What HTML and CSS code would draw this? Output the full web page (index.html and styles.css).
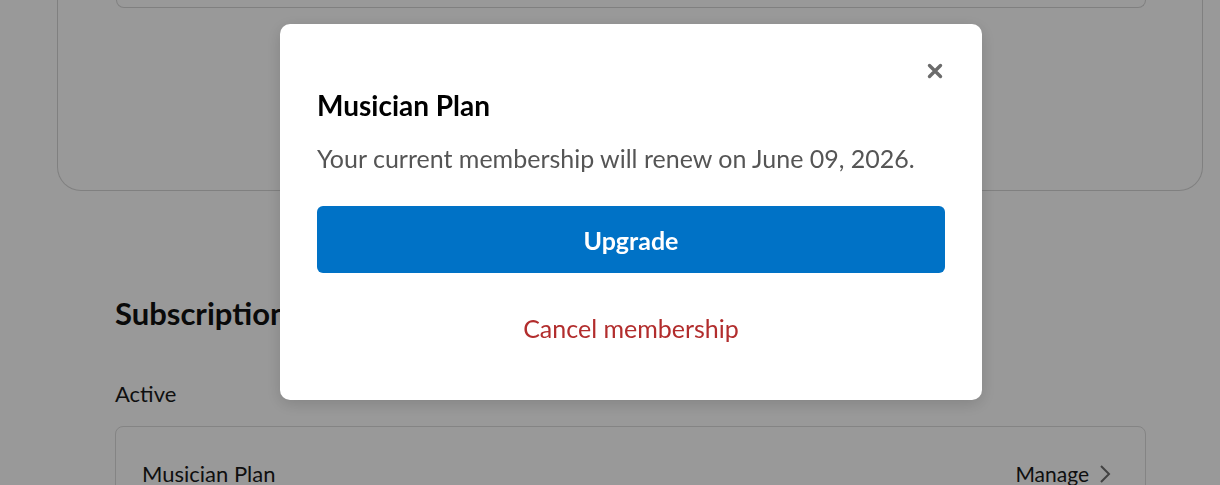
FILE: index.html
```html
<!DOCTYPE html>
<html>
<head>
<meta charset="utf-8">
<link rel="stylesheet" href="styles.css">
</head>
<body>
<main class="page">
  <section class="plan-card">
    <div class="plan-inner"></div>
  </section>
  <section class="subs">
    <h2 class="subs-title">Subscriptions</h2>
    <div class="subs-label">Active</div>
    <div class="subs-card">
      <span class="subs-name">Musician Plan</span>
      <span class="subs-manage">Manage
        <svg class="chev" width="12" height="20" viewBox="0 0 12 20"><path d="M2 2 L10 10 L2 18" fill="none" stroke="#6e6e6e" stroke-width="2"/></svg>
      </span>
    </div>
  </section>
</main>
<div class="overlay"></div>
<div class="modal">
  <button class="close" aria-label="Close">
    <svg width="16" height="16" viewBox="0 0 16 16"><path d="M2.5 2.5 L13.5 13.5 M13.5 2.5 L2.5 13.5" stroke="#6b6b6b" stroke-width="3.4" stroke-linecap="round"/></svg>
  </button>
  <h3 class="modal-title">Musician Plan</h3>
  <p class="modal-text">Your current membership will renew on June 09, 2026.</p>
  <button class="upgrade">Upgrade</button>
  <button class="cancel">Cancel membership</button>
</div>
</body>
</html>
```
FILE: styles.css
```css
* { box-sizing: border-box; }
html, body { margin: 0; padding: 0; }
body {
  width: 1220px;
  height: 485px;
  overflow: hidden;
  background: #fff;
  font-family: Lato, "Noto Sans", sans-serif;
  color: #1a1a1a;
}
.page {
  padding: 0 17px 0 57px;
}
.plan-card {
  margin-top: -200px;
  height: 391px;
  border: 1px solid #d6d6d6;
  border-top: none;
  border-radius: 0 0 24px 24px;
  padding: 0 56px 0 58px;
}
.plan-inner {
  height: 208px;
  border: 1px solid #d6d6d6;
  border-top: none;
  border-radius: 0 0 8px 8px;
}
.subs {
  padding: 0 57px 0 58px;
}
.subs-title {
  margin: 104px 0 0;
  font-size: 31px;
  font-weight: 700;
  line-height: 36px;
  color: #111;
}
.subs-label {
  margin-top: 49px;
  font-size: 22px;
  line-height: 28px;
}
.subs-card {
  margin-top: 18px;
  height: 100px;
  border: 1px solid #dcdcdc;
  border-radius: 8px;
  padding: 33px 34px 0 26px;
  display: flex;
  justify-content: space-between;
  align-items: flex-start;
  font-size: 22px;
  line-height: 28px;
}
.subs-manage {
  display: flex;
  align-items: center;
  gap: 10px;
  font-size: 21px;
}
.overlay {
  position: fixed;
  inset: 0;
  background: rgba(0, 0, 0, 0.4);
}
.modal {
  position: fixed;
  left: 280px;
  top: 24px;
  width: 702px;
  height: 376px;
  background: #fff;
  border-radius: 10px;
  box-shadow: 0 4px 16px rgba(0,0,0,0.15);
  padding: 0 37px;
  display: flex;
  flex-direction: column;
}
.close {
  position: absolute;
  right: 39px;
  top: 39px;
  border: none;
  background: none;
  padding: 0;
  width: 16px;
  height: 16px;
  cursor: pointer;
}
.close svg { display: block; }
.modal-title {
  margin: 64px 0 0;
  font-size: 28px;
  font-weight: 700;
  line-height: 34px;
  color: #000;
}
.modal-text {
  margin: 20px 0 0;
  font-size: 25px;
  line-height: 32px;
  color: #555;
}
.upgrade {
  margin-top: 32px;
  height: 67px;
  border: none;
  border-radius: 6px;
  background: #0072c6;
  color: #fff;
  font-family: Lato, "Noto Sans", sans-serif;
  font-size: 25px;
  font-weight: 700;
}
.cancel {
  margin-top: 39px;
  border: none;
  background: none;
  color: #b22d2d;
  font-family: Lato, "Noto Sans", sans-serif;
  font-size: 25px;
  line-height: 32px;
  padding: 0;
  align-self: center;
}
```
